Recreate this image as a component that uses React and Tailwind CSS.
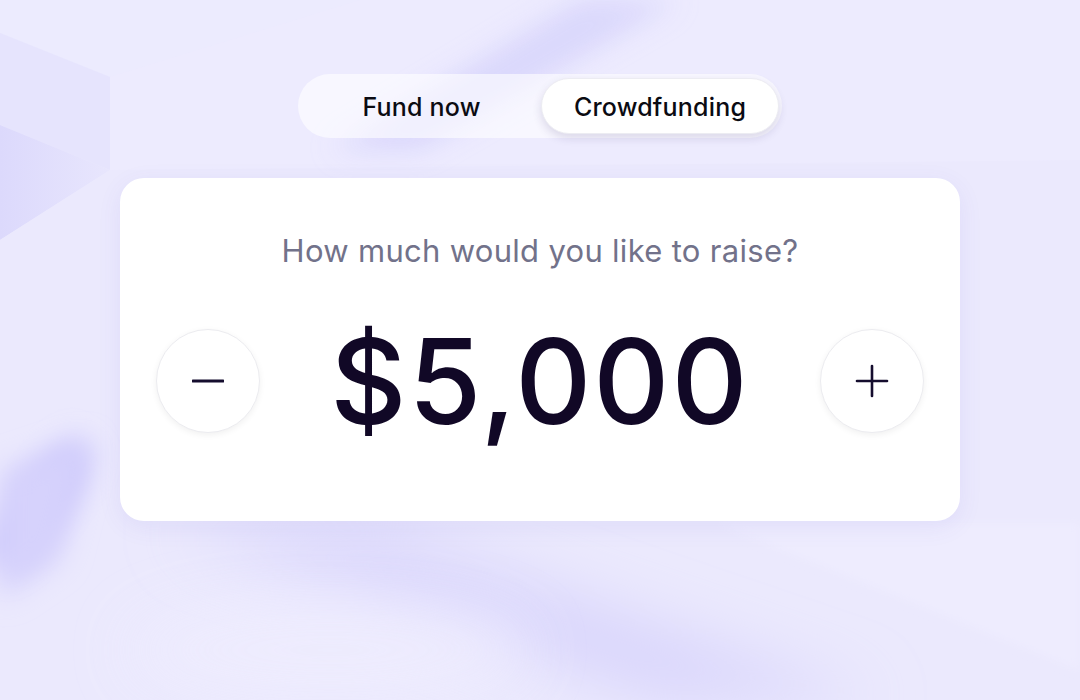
import React from "react";

function Background() {
  return (
    <svg
      className="absolute inset-0 h-full w-full"
      viewBox="0 0 1080 700"
      preserveAspectRatio="none"
    >
      <defs>
        <filter id="b4" x="-20%" y="-20%" width="140%" height="140%">
          <feGaussianBlur stdDeviation="4" />
        </filter>
        <filter id="b14" x="-50%" y="-50%" width="200%" height="200%">
          <feGaussianBlur stdDeviation="14" />
        </filter>
        <filter id="b30" x="-50%" y="-50%" width="200%" height="200%">
          <feGaussianBlur stdDeviation="30" />
        </filter>
        <linearGradient id="tl" x1="0" y1="0" x2="1" y2="0">
          <stop offset="0" stopColor="#dcd9fc" />
          <stop offset="1" stopColor="#e8e6fd" />
        </linearGradient>
      </defs>
      <rect width="1080" height="700" fill="#ebe9fd" />
      {/* top-left facets */}
      <polygon points="0,0 360,0 110,77 0,33" fill="#ecebfe" />
      <polygon points="110,77 360,0 1080,0 1080,160 110,170" fill="#edebfe" />
      <polygon points="0,33 110,77 110,170 0,125" fill="#e6e4fd" />
      <polygon points="0,125 110,170 0,240" fill="url(#tl)" />
      <polygon points="110,170 0,240 0,330 300,180" fill="#ebe9fd" />
      {/* darker band near the top center */}
      <polygon points="580,0 680,0 420,150 330,150" fill="#d8d5fc" filter="url(#b14)" opacity="0.9" />
      {/* bottom-left purple streak */}
      <ellipse cx="40" cy="505" rx="26" ry="75" fill="#c4c0fb" filter="url(#b14)" transform="rotate(35 40 505)" />
      <polygon points="0,470 90,440 60,560 0,600" fill="#d6d2fc" filter="url(#b14)" />
      {/* bottom diagonal dark band */}
      <polygon points="170,530 380,530 880,700 660,700" fill="#d9d5fc" filter="url(#b30)" />
      {/* bottom right lighter facet */}
      <polygon points="716,523 1080,523 1080,670" fill="#eeecfe" filter="url(#b4)" />
      {/* soft light patch bottom */}
      <ellipse cx="330" cy="650" rx="200" ry="50" fill="#efedfe" filter="url(#b30)" opacity="0.8" />
    </svg>
  );
}

export default function App() {
  return (
    <div
      className="relative h-[700px] w-[1080px] overflow-hidden bg-[#ebe9fd]"
      style={{ fontFamily: "Inter, 'Noto Sans', sans-serif" }}
    >
      <Background />
      <div className="relative flex flex-col items-center pt-[74px]">
        <div className="flex h-[64px] w-[484px] items-center rounded-full bg-white/60 py-[4px] pl-[4px] pr-[3px]">
          <div className="flex flex-1 items-center justify-center pt-[3px] text-[25px] font-medium tracking-[0.2px] text-[#0b0b12]">
            Fund now
          </div>
          <div className="flex h-[56px] w-[238px] items-center justify-center rounded-full border border-[#ececf2] bg-white pt-[3px] text-[25px] font-medium tracking-[0.2px] text-[#0b0b12] shadow-[0_4px_10px_rgba(40,30,90,0.14)]">
            Crowdfunding
          </div>
        </div>

        <div className="mt-[40px] flex h-[343px] w-[840px] flex-col items-center rounded-[24px] bg-white px-[36px] pt-[53px] shadow-[0_6px_24px_rgba(90,80,200,0.08)]">
          <div className="text-[31px] leading-[40px] tracking-[0.3px] text-[#72728a]">
            How much would you like to raise?
          </div>
          <div className="mt-[51px] flex w-full items-center justify-between">
            <button className="flex h-[104px] w-[104px] items-center justify-center rounded-full border border-[#ececf0] bg-white shadow-[0_2px_6px_rgba(0,0,0,0.06)]">
              <svg width="32" height="32" viewBox="0 0 32 32">
                <line x1="1" y1="16" x2="31" y2="16" stroke="#150d2e" strokeWidth="3" strokeLinecap="round" />
              </svg>
            </button>
            <div className="text-[118px] font-medium leading-none tracking-[2px] text-[#110826]">
              $5,000
            </div>
            <button className="flex h-[104px] w-[104px] items-center justify-center rounded-full border border-[#ececf0] bg-white shadow-[0_2px_6px_rgba(0,0,0,0.06)]">
              <svg width="34" height="34" viewBox="0 0 34 34">
                <line x1="2" y1="17" x2="32" y2="17" stroke="#150d2e" strokeWidth="2.6" strokeLinecap="round" />
                <line x1="17" y1="2" x2="17" y2="32" stroke="#150d2e" strokeWidth="2.6" strokeLinecap="round" />
              </svg>
            </button>
          </div>
        </div>
      </div>
    </div>
  );
}
